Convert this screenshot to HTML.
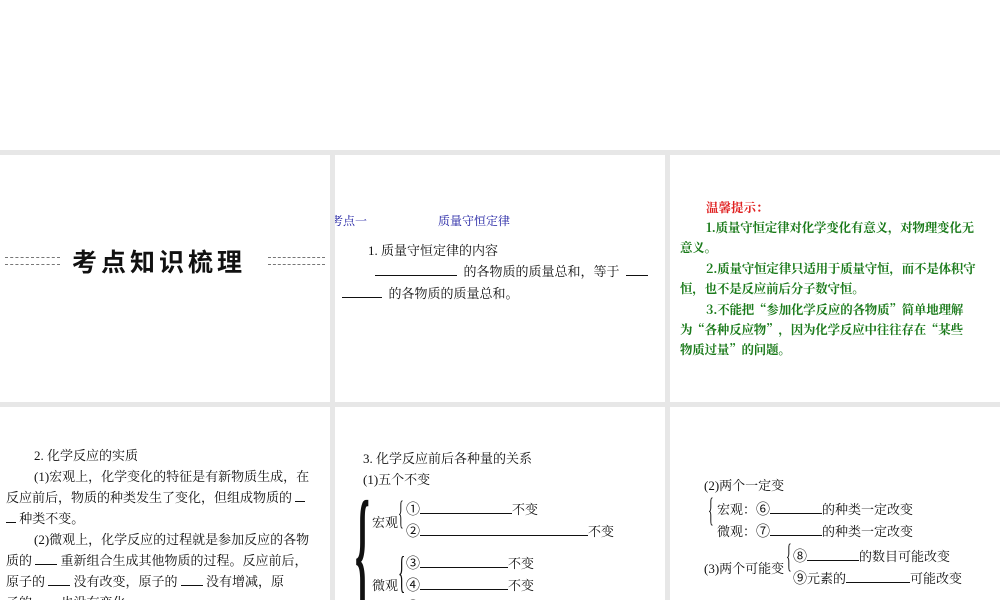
<!DOCTYPE html>
<html><head><meta charset="utf-8"><style>
body{margin:0;width:1000px;height:600px;background:#e7e7e7;position:relative;overflow:hidden;font-family:"Liberation Serif","Noto Serif CJK SC",serif;font-size:13px;color:#111}
.p{position:absolute;background:#fff;overflow:hidden}
.t{position:absolute;white-space:nowrap}
.u{display:inline-block;border-bottom:1px solid #111;height:12px;vertical-align:baseline}
.g{color:#1a7a1a;font-weight:bold;font-size:12.5px;font-family:"Noto Serif CJK SC",serif;letter-spacing:-0.2px}
.c{font-family:"Noto Sans CJK SC",sans-serif;font-size:14px}
</style></head><body>
<div class="p" style="left:0;top:0;width:1000px;height:150px"></div>
<div class="p" style="left:0;top:155px;width:330px;height:247px">
 <div class="t" style="left:5px;top:102px;width:55px;border-top:1px dashed #777;height:6px;border-bottom:1px dashed #777"></div>
 <div class="t" style="left:72px;top:88px;font-family:'Noto Sans CJK SC',sans-serif;font-weight:bold;font-size:25px;letter-spacing:4px">考点知识梳理</div>
 <div class="t" style="left:268px;top:102px;width:57px;border-top:1px dashed #777;height:6px;border-bottom:1px dashed #777"></div>
</div>
<div class="p" style="left:335px;top:155px;width:330px;height:247px">
 <div class="t" style="left:-4px;top:57px;color:#1a1aa0;font-size:12px">考点一</div>
 <div class="t" style="left:103px;top:57px;color:#1a1aa0;font-size:12px">质量守恒定律</div>
 <div class="t" style="left:33px;top:85px">1. 质量守恒定律的内容</div>
 <div class="t" style="left:40px;top:106px"><span class="u" style="width:82px"></span>&nbsp; 的各物质的质量总和，等于 &nbsp;<span class="u" style="width:22px"></span></div>
 <div class="t" style="left:7px;top:128px"><span class="u" style="width:40px"></span>&nbsp; 的各物质的质量总和。</div>
</div>
<div class="p" style="left:670px;top:155px;width:330px;height:247px">
 <div class="t" style="left:36px;top:43px;color:#e02020;font-weight:bold;font-size:12.5px;font-family:'Noto Serif CJK SC',serif">温馨提示：</div>
 <div class="t g" style="left:36px;top:63px">1.质量守恒定律对化学变化有意义，对物理变化无</div>
 <div class="t g" style="left:10px;top:83px">意义。</div>
 <div class="t g" style="left:36px;top:104px">2.质量守恒定律只适用于质量守恒，而不是体积守</div>
 <div class="t g" style="left:10px;top:124px">恒，也不是反应前后分子数守恒。</div>
 <div class="t g" style="left:36px;top:145px">3.不能把“参加化学反应的各物质”简单地理解</div>
 <div class="t g" style="left:10px;top:165px">为“各种反应物”，因为化学反应中往往存在“某些</div>
 <div class="t g" style="left:10px;top:185px">物质过量”的问题。</div>
</div>
<div class="p" style="left:0;top:407px;width:330px;height:193px">
 <div class="t" style="left:34px;top:38px">2. 化学反应的实质</div>
 <div class="t" style="left:34px;top:59px">(1)宏观上，化学变化的特征是有新物质生成，在</div>
 <div class="t" style="left:6px;top:80px">反应前后，物质的种类发生了变化，但组成物质的 <span class="u" style="width:10px"></span></div>
 <div class="t" style="left:6px;top:101px"><span class="u" style="width:10px"></span> 种类不变。</div>
 <div class="t" style="left:34px;top:122px">(2)微观上，化学反应的过程就是参加反应的各物</div>
 <div class="t" style="left:6px;top:143px">质的 <span class="u" style="width:22px"></span> 重新组合生成其他物质的过程。反应前后，</div>
 <div class="t" style="left:6px;top:164px">原子的 <span class="u" style="width:22px"></span> 没有改变，原子的 <span class="u" style="width:22px"></span> 没有增减，原</div>
 <div class="t" style="left:6px;top:185px">子的 <span class="u" style="width:22px"></span> 也没有变化。</div>
</div>
<div class="p" style="left:335px;top:407px;width:330px;height:193px">
 <div class="t" style="left:28px;top:41px">3. 化学反应前后各种量的关系</div>
 <div class="t" style="left:28px;top:62px">(1)五个不变</div>
 <div class="t" style="left:20px;top:72px;font-size:150px;line-height:150px;transform:scaleX(.25);transform-origin:left;font-weight:bold">{</div>
 <div class="t" style="left:37px;top:105px">宏观</div>
 <div class="t" style="left:63px;top:88px;font-size:34px;transform:scaleX(.35);transform-origin:left">{</div>
 <div class="t" style="left:71px;top:92px"><span class="c">①</span><span class="u" style="width:92px"></span>不变</div>
 <div class="t" style="left:71px;top:114px"><span class="c">②</span><span class="u" style="width:168px"></span>不变</div>
 <div class="t" style="left:37px;top:168px">微观</div>
 <div class="t" style="left:63px;top:140px;font-size:44px;transform:scaleX(.35);transform-origin:left">{</div>
 <div class="t" style="left:71px;top:146px"><span class="c">③</span><span class="u" style="width:88px"></span>不变</div>
 <div class="t" style="left:71px;top:168px"><span class="c">④</span><span class="u" style="width:88px"></span>不变</div>
 <div class="t" style="left:71px;top:190px"><span class="c">⑤</span>原子的质量不变</div>
</div>
<div class="p" style="left:670px;top:407px;width:330px;height:193px">
 <div class="t" style="left:34px;top:68px">(2)两个一定变</div>
 <div class="t" style="left:38px;top:85px;font-size:34px;transform:scaleX(.35);transform-origin:left">{</div>
 <div class="t" style="left:47px;top:92px">宏观：<span class="c">⑥</span><span class="u" style="width:52px"></span>的种类一定改变</div>
 <div class="t" style="left:47px;top:114px">微观：<span class="c">⑦</span><span class="u" style="width:52px"></span>的种类一定改变</div>
 <div class="t" style="left:34px;top:151px">(3)两个可能变</div>
 <div class="t" style="left:116px;top:131px;font-size:34px;transform:scaleX(.35);transform-origin:left">{</div>
 <div class="t" style="left:123px;top:139px"><span class="c">⑧</span><span class="u" style="width:52px"></span>的数目可能改变</div>
 <div class="t" style="left:123px;top:161px"><span class="c">⑨</span>元素的<span class="u" style="width:64px"></span>可能改变</div>
</div>
</body></html>
